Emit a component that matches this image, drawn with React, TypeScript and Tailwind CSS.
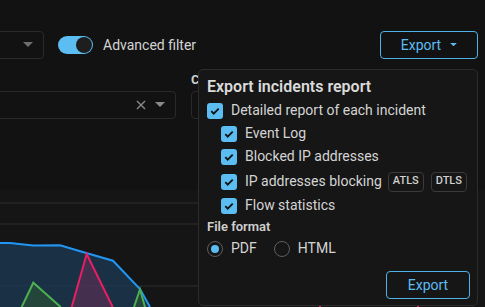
function Caret({ className = '' }: { className?: string }) {
  return (
    <svg width="10" height="6" viewBox="0 0 10 6" className={className}>
      <path d="M0 0h10L5 5z" fill="currentColor" />
    </svg>
  );
}

function Checkbox() {
  return (
    <span className="flex w-4 h-4 shrink-0 items-center justify-center rounded-[3px] bg-[#5bbdf2]">
      <svg width="12" height="12" viewBox="0 0 12 12">
        <path d="M2.3 6.2l2.4 2.4 5-5" fill="none" stroke="#141414" strokeWidth="1.9" />
      </svg>
    </span>
  );
}

function CheckRow({ label, indent, children }: { label: string; indent?: boolean; children?: React.ReactNode }) {
  return (
    <div className={`flex items-center h-[23px] gap-2 ${indent ? 'pl-[14px]' : ''}`}>
      <Checkbox />
      <span className="text-[14px] text-[#d4d4d4]">{label}</span>
      {children}
    </div>
  );
}

function Chip({ text }: { text: string }) {
  return (
    <span className="flex items-center h-[20px] px-[4px] rounded-[4px] border border-[#3a3a3a] text-[11px] font-medium text-[#d0d0d0]">
      {text}
    </span>
  );
}

function Radio({ checked, label }: { checked?: boolean; label: string }) {
  return (
    <div className="flex items-center gap-2">
      <span className="flex w-4 h-4 items-center justify-center rounded-full border-[1.5px] border-[#5e5e5e]">
        {checked ? <span className="w-2 h-2 rounded-full bg-[#5bbdf2]" /> : null}
      </span>
      <span className="text-[14px] text-[#d4d4d4]">{label}</span>
    </div>
  );
}

function Chart() {
  return (
    <svg width="485" height="117" viewBox="0 0 485 117" className="block">
      <line x1="0" y1="13" x2="198" y2="13" stroke="#2f2f2f" />
      <line x1="0" y1="34" x2="198" y2="34" stroke="#2f2f2f" />
      <line x1="0" y1="96" x2="198" y2="96" stroke="#2f2f2f" />
      <path
        d="M0 53 L10 53 L33 55.5 L60 55.3 L87 63.3 L113 70.7 L140 99 L150 117 L0 117 Z"
        fill="#1b3a55"
        fillOpacity="0.75"
      />
      <path d="M0 53 L10 53 L33 55.5 L60 55.3 L87 63.3 L113 70.7 L140 99 L150 117" fill="none" stroke="#2196f3" strokeWidth="2" />
      <path d="M71.7 117 L86.7 64 L112.7 117" fill="#7a2f5c" fillOpacity="0.45" stroke="#e91e63" strokeWidth="2" />
      <path d="M21.7 117 L33.3 92.7 L60.7 117" fill="#2e5a2f" fillOpacity="0.5" stroke="#4caf50" strokeWidth="2" />
      <path d="M134 117 L140 99.3 L145 117" fill="#2e5a2f" fillOpacity="0.5" stroke="#4caf50" strokeWidth="2" />
      <line x1="320" y1="115" x2="320" y2="117" stroke="#e91e63" strokeWidth="2" />
      <line x1="418" y1="115" x2="418" y2="117" stroke="#e91e63" strokeWidth="2" />
    </svg>
  );
}

export default function App() {
  return (
    <div className="relative w-[485px] h-[307px] overflow-hidden bg-[#121212] font-['Roboto',sans-serif]">
      <div className="flex items-center h-[28px] mt-[31px]">
        <div className="flex items-center justify-end w-[60px] h-[28px] -ml-[16px] pr-[10px] rounded-[4px] border border-[#2a2a2a]">
          <Caret className="text-[#6e6e6e]" />
        </div>
        <div className="ml-[14px] flex items-center w-[35px] h-[18px] rounded-full bg-[#5bbdf2] pl-[18px]">
          <span className="w-[16px] h-[16px] rounded-full bg-[#1e1e1e]" />
        </div>
        <span className="ml-[10px] text-[14px] text-[#d4d4d4]">Advanced filter</span>
        <button className="ml-auto mr-[7px] flex items-center justify-center gap-[9px] w-[98px] h-[28px] rounded-[4px] border border-[#4fb1e6] text-[14px] text-[#5bbdf2]">
          Export
          <Caret className="w-[7px] h-[4px]" />
        </button>
      </div>

      <div className="flex items-end mt-[13px]">
        <div className="flex items-center justify-end gap-[9px] w-[194px] h-[28px] -ml-[18px] pr-[10px] rounded-[4px] border border-[#2a2a2a]">
          <svg width="10" height="10" viewBox="0 0 10 10">
            <path d="M1 1l8 8M9 1l-8 8" stroke="#8a8a8a" strokeWidth="1.4" />
          </svg>
          <Caret className="text-[#8a8a8a]" />
        </div>
        <div className="ml-[15px] flex flex-col">
          <span className="h-[16px] mb-[3px] text-[13px] font-bold leading-[16px] text-[#cfcfcf]">C</span>
          <div className="w-[120px] h-[28px] rounded-[4px] border border-[#2a2a2a]" />
        </div>
      </div>

      <div className="mt-[71px] bg-[#151515]">
        <Chart />
      </div>

      <div className="absolute left-[198px] top-[69px] w-[280px] h-[237px] rounded-[5px] border border-[#2c2c2c] bg-[#161616] pl-[8px] pt-[6px]">
        <div className="text-[16px] font-semibold leading-[22px] text-[#dadada]">Export incidents report</div>
        <div className="mt-[1px] flex flex-col">
          <CheckRow label="Detailed report of each incident" />
          <CheckRow label="Event Log" indent />
          <CheckRow label="Blocked IP addresses" indent />
          <div className="h-[2px]" />
          <CheckRow label="IP addresses blocking" indent>
            <div className="-ml-[2px] flex gap-[7px]">
              <Chip text="ATLS" />
              <Chip text="DTLS" />
            </div>
          </CheckRow>
          <div className="h-[1px]" />
          <CheckRow label="Flow statistics" indent />
        </div>
        <div className="mt-[2px] text-[13px] font-semibold leading-[16px] text-[#cfcfcf]">File format</div>
        <div className="mt-[3px] flex items-center gap-[17px]">
          <Radio checked label="PDF" />
          <Radio label="HTML" />
        </div>
        <div className="flex justify-end pr-[7px] mt-[12px]">
          <button className="w-[84px] h-[28px] rounded-[4px] border border-[#4fb1e6] text-[14px] text-[#5bbdf2]">Export</button>
        </div>
      </div>
    </div>
  );
}
